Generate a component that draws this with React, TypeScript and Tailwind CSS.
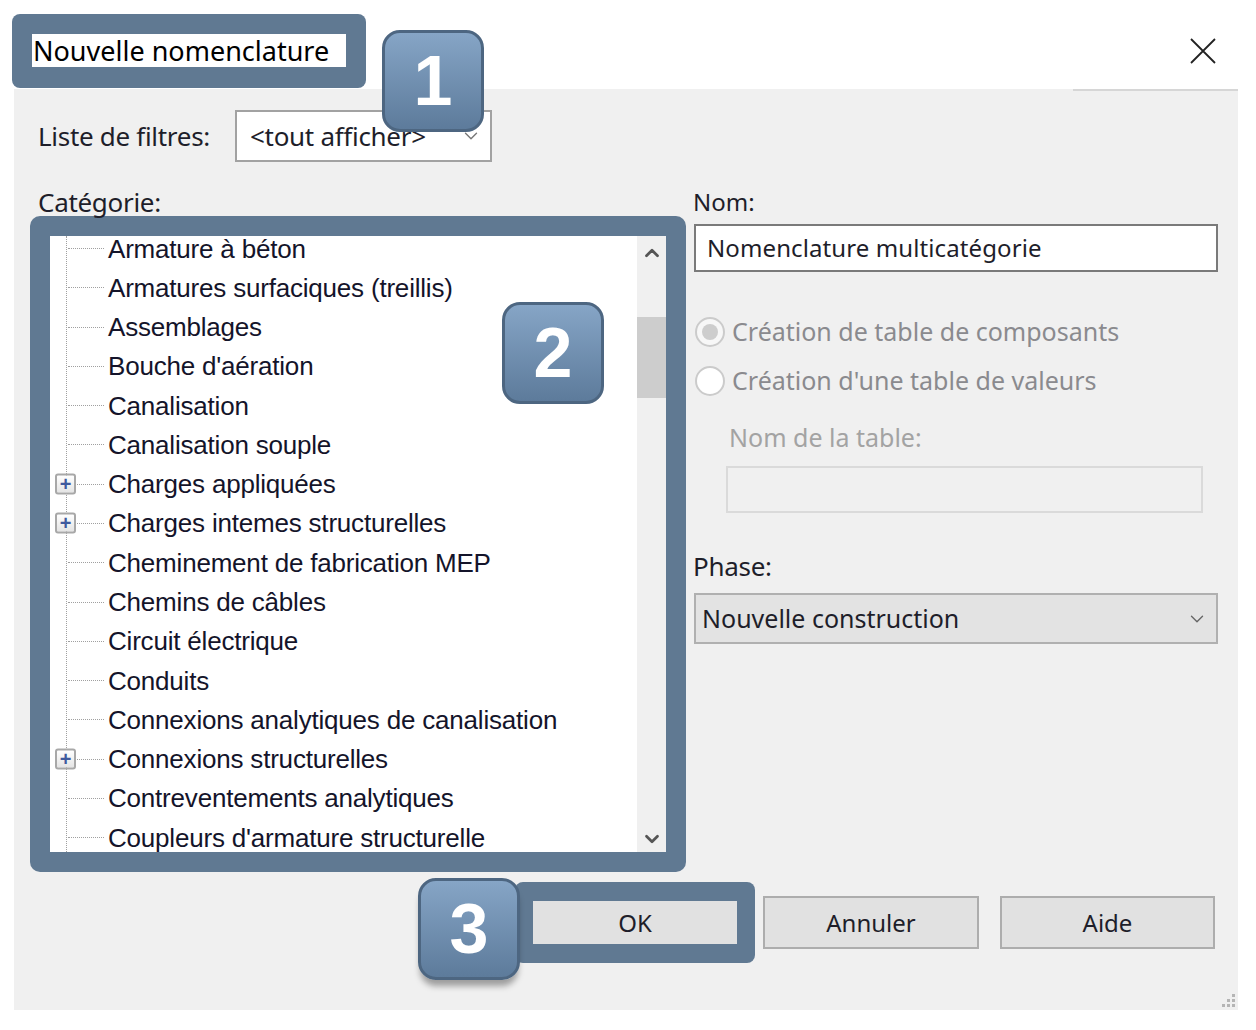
import { ChevronDown, ChevronUp } from "lucide-react";

const items: { label: string; plus?: boolean }[] = [
  { label: "Armature à béton" },
  { label: "Armatures surfaciques (treillis)" },
  { label: "Assemblages" },
  { label: "Bouche d'aération" },
  { label: "Canalisation" },
  { label: "Canalisation souple" },
  { label: "Charges appliquées", plus: true },
  { label: "Charges intemes structurelles", plus: true },
  { label: "Cheminement de fabrication MEP" },
  { label: "Chemins de câbles" },
  { label: "Circuit électrique" },
  { label: "Conduits" },
  { label: "Connexions analytiques de canalisation" },
  { label: "Connexions structurelles", plus: true },
  { label: "Contreventements analytiques" },
  { label: "Coupleurs d'armature structurelle" },
];

const Badge = ({ n, className }: { n: string; className: string }) => (
  <div
    className={`absolute w-[102px] h-[102px] rounded-[18px] border-[3px] border-[#4d6681] bg-gradient-to-b from-[#86a5c6] to-[#5d7b9b] flex items-center justify-center text-white font-bold text-[70px] leading-none font-['Liberation_Sans',sans-serif] ${className}`}
  >
    {n}
  </div>
);

const TreeRow = ({ label, plus }: { label: string; plus?: boolean }) => (
  <div className="relative h-[39.27px] flex items-center">
    <div className="w-[16px] shrink-0" />
    <div className="w-[36px] ml-[2px] shrink-0 border-t border-dotted border-[#a0a0a0]" />
    <span className="ml-[4px] text-[26px] leading-none tracking-[-0.2px] text-[#14142a] whitespace-nowrap font-['Liberation_Sans',sans-serif]">
      {label}
    </span>
    {plus && (
      <div className="absolute left-[5px] top-1/2 -translate-y-1/2 w-[21px] h-[21px] rounded-[3px] border-2 border-[#a8a8a8] bg-gradient-to-b from-white to-[#e4e4e4] flex items-center justify-center">
        <span className="text-[#3f5a9e] text-[20px] font-bold leading-none font-['Liberation_Sans',sans-serif] -mt-[2px]">+</span>
      </div>
    )}
  </div>
);

const Button = ({ label, className = "" }: { label: string; className?: string }) => (
  <div
    className={`flex items-center justify-center bg-[#e1e1e1] border-2 border-[#adadad] text-[24px] text-[#1e1e2a] ${className}`}
  >
    {label}
  </div>
);

export default function App() {
  return (
    <div className="relative w-[1256px] h-[1030px] bg-white overflow-hidden font-['Noto_Sans',sans-serif] text-[#1e1e2a]">
      {/* title bar */}
      <div className="h-[89px] flex items-start">
        <div className="ml-[12px] mt-[14px] w-[354px] h-[74px] rounded-[8px] bg-[#607992] pl-[20px] pt-[20px]">
          <div className="w-[314px] h-[33px] bg-white flex items-center pl-[1px] text-[27px] text-black leading-none">
            Nouvelle nomenclature
          </div>
        </div>
        <svg className="ml-auto mr-[40px] mt-[38px]" width="26" height="26" viewBox="0 0 26 26">
          <path d="M1 1 L25 25 M25 1 L1 25" stroke="#222" strokeWidth="1.8" />
        </svg>
      </div>

      {/* dialog body */}
      <div className="relative ml-[14px] w-[1224px] h-[921px] bg-[#f0f0f0]">
        <div className="h-[2px] flex">
          <div className="ml-auto w-[165px] h-[2px] bg-[#d6d6d6]" />
        </div>

        <div className="mt-[19px] flex items-center h-[52px]">
          <span className="ml-[24px] w-[197px] text-[26px] tracking-[-0.3px]">Liste de filtres:</span>
          <div className="w-[257px] h-[52px] bg-white border-2 border-[#a2a2a2] flex items-center pl-[13px] text-[26px] tracking-[-0.3px]">
            <span>&lt;tout afficher&gt;</span>
            <ChevronDown className="ml-auto mr-[8px] text-[#777]" size={22} strokeWidth={1.5} />
          </div>
        </div>

        <div className="mt-[26px] flex">
          {/* left: category tree */}
          <div className="ml-[16px] w-[656px]">
            <div className="h-[28px] flex items-center ml-[8px] text-[26px] tracking-[-0.3px]">Catégorie:</div>
            <div className="w-[656px] h-[656px] rounded-[10px] bg-[#607992] p-[20px]">
              <div className="relative w-[616px] h-[616px] bg-white overflow-hidden flex">
                <div className="relative flex-1 overflow-hidden">
                  <div className="absolute left-[16px] top-0 bottom-0 border-l border-dotted border-[#a0a0a0]" />
                  <div className="-mt-[7px]">
                    {items.map((it) => (
                      <TreeRow key={it.label} label={it.label} plus={it.plus} />
                    ))}
                  </div>
                </div>
                <div className="w-[29px] h-full bg-[#f0f0f0] flex flex-col items-center">
                  <ChevronUp className="mt-[6px] text-[#555]" size={22} strokeWidth={3} />
                  <div className="mt-[53px] w-full h-[81px] bg-[#cdcdcd]" />
                  <ChevronDown className="mt-auto mb-[2px] text-[#555]" size={22} strokeWidth={3} />
                </div>
              </div>
            </div>
          </div>

          {/* right: name / options / phase */}
          <div className="ml-[7px] w-[525px] flex flex-col">
            <div className="h-[28px] flex items-center text-[24px]">Nom:</div>
            <div className="mt-[8px] ml-[1px] w-[524px] h-[48px] bg-white border-2 border-[#7a7a7a] flex items-center pl-[11px] text-[24px] tracking-[0.1px]">
              Nomenclature multicatégorie
            </div>

            <div className="mt-[43px] h-[34px] flex items-center">
              <div className="ml-[2px] w-[30px] h-[30px] rounded-full border-2 border-[#cbcbcb] bg-[#f7f7f7] flex items-center justify-center">
                <div className="w-[16px] h-[16px] rounded-full bg-[#cdcdcd]" />
              </div>
              <span className="ml-[7px] text-[25px] text-[#8a8a8e]">Création de table de composants</span>
            </div>
            <div className="mt-[15px] h-[34px] flex items-center">
              <div className="ml-[2px] w-[30px] h-[30px] rounded-full border-2 border-[#cbcbcb] bg-white" />
              <span className="ml-[7px] text-[25px] text-[#8a8a8e]">Création d'une table de valeurs</span>
            </div>

            <div className="mt-[26px] ml-[36px] h-[28px] flex items-center text-[25px] text-[#a3a3a3]">
              Nom de la table:
            </div>
            <div className="mt-[14px] ml-[33px] w-[477px] h-[47px] border-2 border-[#dadada] bg-[#f0f0f0]" />

            <div className="mt-[39px] h-[28px] flex items-center text-[26px] tracking-[-0.3px]">Phase:</div>
            <div className="mt-[13px] ml-[1px] w-[524px] h-[51px] bg-[#e3e3e3] border-2 border-[#b0b0b0] flex items-center pl-[6px] text-[25px]">
              Nouvelle construction
              <ChevronDown className="ml-auto mr-[8px] text-[#666]" size={22} strokeWidth={1.5} />
            </div>
          </div>
        </div>

        {/* buttons */}
        <div className="mt-[10px] flex items-center justify-end pr-[23px]">
          <div className="w-[240px] h-[81px] rounded-[8px] bg-[#607992] pl-[18px] pt-[19px]">
            <div className="w-[204px] h-[43px] bg-[#e1e1e1] flex items-center justify-center text-[24px]">OK</div>
          </div>
          <Button label="Annuler" className="ml-[8px] w-[216px] h-[53px]" />
          <Button label="Aide" className="ml-[21px] w-[215px] h-[53px]" />
        </div>

        <svg className="absolute right-[2px] bottom-[2px]" width="16" height="16" viewBox="0 0 16 16">
          <g fill="#b5b5b5">
            <rect x="12" y="2" width="3" height="3" />
            <rect x="7" y="7" width="3" height="3" />
            <rect x="12" y="7" width="3" height="3" />
            <rect x="2" y="12" width="3" height="3" />
            <rect x="7" y="12" width="3" height="3" />
            <rect x="12" y="12" width="3" height="3" />
          </g>
        </svg>
      </div>

      <Badge n="1" className="left-[382px] top-[30px]" />
      <Badge n="2" className="left-[502px] top-[302px]" />
      <Badge n="3" className="left-[418px] top-[878px] shadow-[0_8px_6px_-2px_rgba(0,0,0,0.35)]" />
    </div>
  );
}
